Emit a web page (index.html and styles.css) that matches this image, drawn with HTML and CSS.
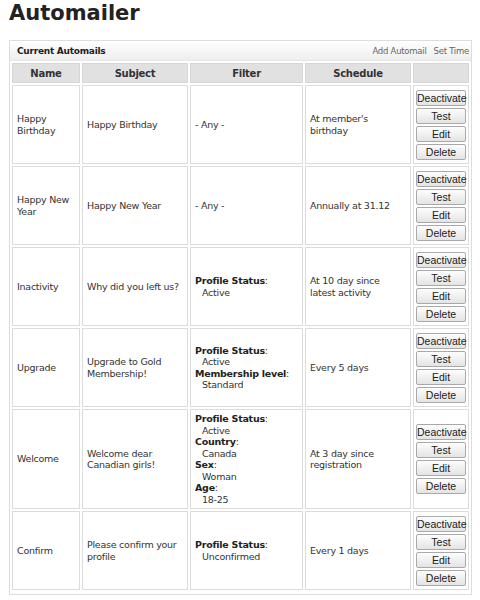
FILE: index.html
```html
<!DOCTYPE html>
<html lang="en">
<head>
    <meta charset="UTF-8">
    <title>Automailer</title>
    <link rel="stylesheet" href="styles.css">
</head>
<body>
    <h1>Automailer</h1>

    <div class="panel">
        <div class="panel-head">
            <span class="panel-title">Current Automails</span>
            <span class="panel-links"><a href="#">Add Automail</a><a href="#">Set Time</a></span>
        </div>

        <table class="mails">
            <thead>
                <tr>
                    <th class="c-name">Name</th>
                    <th class="c-subject">Subject</th>
                    <th class="c-filter">Filter</th>
                    <th class="c-schedule">Schedule</th>
                    <th class="c-actions"></th>
                </tr>
            </thead>
            <tbody>
                <tr>
                    <td>Happy Birthday</td>
                    <td>Happy Birthday</td>
                    <td>- Any -</td>
                    <td>At member's birthday</td>
                    <td class="actions"><button>Deactivate</button><button>Test</button><button>Edit</button><button>Delete</button></td>
                </tr>
                <tr>
                    <td>Happy New Year</td>
                    <td>Happy New Year</td>
                    <td>- Any -</td>
                    <td>Annually at 31.12</td>
                    <td class="actions"><button>Deactivate</button><button>Test</button><button>Edit</button><button>Delete</button></td>
                </tr>
                <tr>
                    <td>Inactivity</td>
                    <td>Why did you left us?</td>
                    <td><b>Profile Status</b>:<div class="val">Active</div></td>
                    <td>At 10 day since latest activity</td>
                    <td class="actions"><button>Deactivate</button><button>Test</button><button>Edit</button><button>Delete</button></td>
                </tr>
                <tr>
                    <td>Upgrade</td>
                    <td>Upgrade to Gold Membership!</td>
                    <td><b>Profile Status</b>:<div class="val">Active</div><b>Membership level</b>:<div class="val">Standard</div></td>
                    <td>Every 5 days</td>
                    <td class="actions"><button>Deactivate</button><button>Test</button><button>Edit</button><button>Delete</button></td>
                </tr>
                <tr>
                    <td>Welcome</td>
                    <td>Welcome dear Canadian girls!</td>
                    <td><b>Profile Status</b>:<div class="val">Active</div><b>Country</b>:<div class="val">Canada</div><b>Sex</b>:<div class="val">Woman</div><b>Age</b>:<div class="val">18-25</div></td>
                    <td>At 3 day since registration</td>
                    <td class="actions"><button>Deactivate</button><button>Test</button><button>Edit</button><button>Delete</button></td>
                </tr>
                <tr>
                    <td>Confirm</td>
                    <td>Please confirm your profile</td>
                    <td><b>Profile Status</b>:<div class="val">Unconfirmed</div></td>
                    <td>Every 1 days</td>
                    <td class="actions"><button>Deactivate</button><button>Test</button><button>Edit</button><button>Delete</button></td>
                </tr>
            </tbody>
        </table>
    </div>
</body>
</html>
```

FILE: styles.css
```css
body {
    margin: 0;
    padding: 0 8px 0 9px;
    font-family: "DejaVu Sans", Verdana, sans-serif;
    font-size: 9.5px;
    letter-spacing: -0.25px;
    color: #333;
    background: #fff;
}

h1 {
    margin: 0;
    padding-top: 1px;
    height: 39px;
    font-size: 21px;
    font-weight: bold;
    letter-spacing: 0;
    color: #222;
    line-height: 25px;
}

.panel {
    border: 1px solid #ddd;
    width: 461px;
    padding-bottom: 2px;
}

.panel-head {
    display: flex;
    justify-content: space-between;
    align-items: center;
    height: 19px;
    padding: 0 2px 0 7px;
    background: linear-gradient(#ffffff, #eeeeee);
    border-bottom: 1px solid #e6e6e6;
}

.panel-title {
    font-weight: bold;
    font-size: 9px;
    color: #222;
}

.panel-links a {
    color: #666;
    text-decoration: none;
    font-size: 8.5px;
    margin-left: 7px;
}

.mails {
    border-collapse: separate;
    border-spacing: 2px;
    width: 100%;
    table-layout: fixed;
}

.mails th,
.mails td {
    box-sizing: border-box;
}

.mails th {
    background: #e1e1e1;
    border: 1px solid #d6d6d6;
    height: 20px;
    padding: 0;
    font-weight: bold;
    font-size: 10px;
    color: #333;
}

.mails td {
    border: 1px solid #dcdcdc;
    padding: 3px 3px 3px 4px;
    height: 79px;
    vertical-align: middle;
    color: #333;
    line-height: 11.5px;
}

.c-name { width: 68px; }
.c-subject { width: 106px; }
.c-filter { width: 113px; }
.c-schedule { width: 106px; }
.c-actions { width: 56px; }

.mails td b {
    color: #222;
}

.val {
    padding-left: 7px;
}

.mails td.actions {
    padding: 0 2px;
    text-align: center;
}

.actions button {
    display: block;
    width: 50px;
    height: 16px;
    margin: 0 auto 2px;
    padding: 0;
    font-family: "Liberation Sans", Arial, sans-serif;
    font-size: 10.5px;
    letter-spacing: 0;
    color: #222;
    background: linear-gradient(#fdfdfd, #e4e4e4);
    border: 1px solid #a9a9a9;
    border-radius: 2px;
}

.actions button:last-child {
    margin-bottom: 0;
}
```
